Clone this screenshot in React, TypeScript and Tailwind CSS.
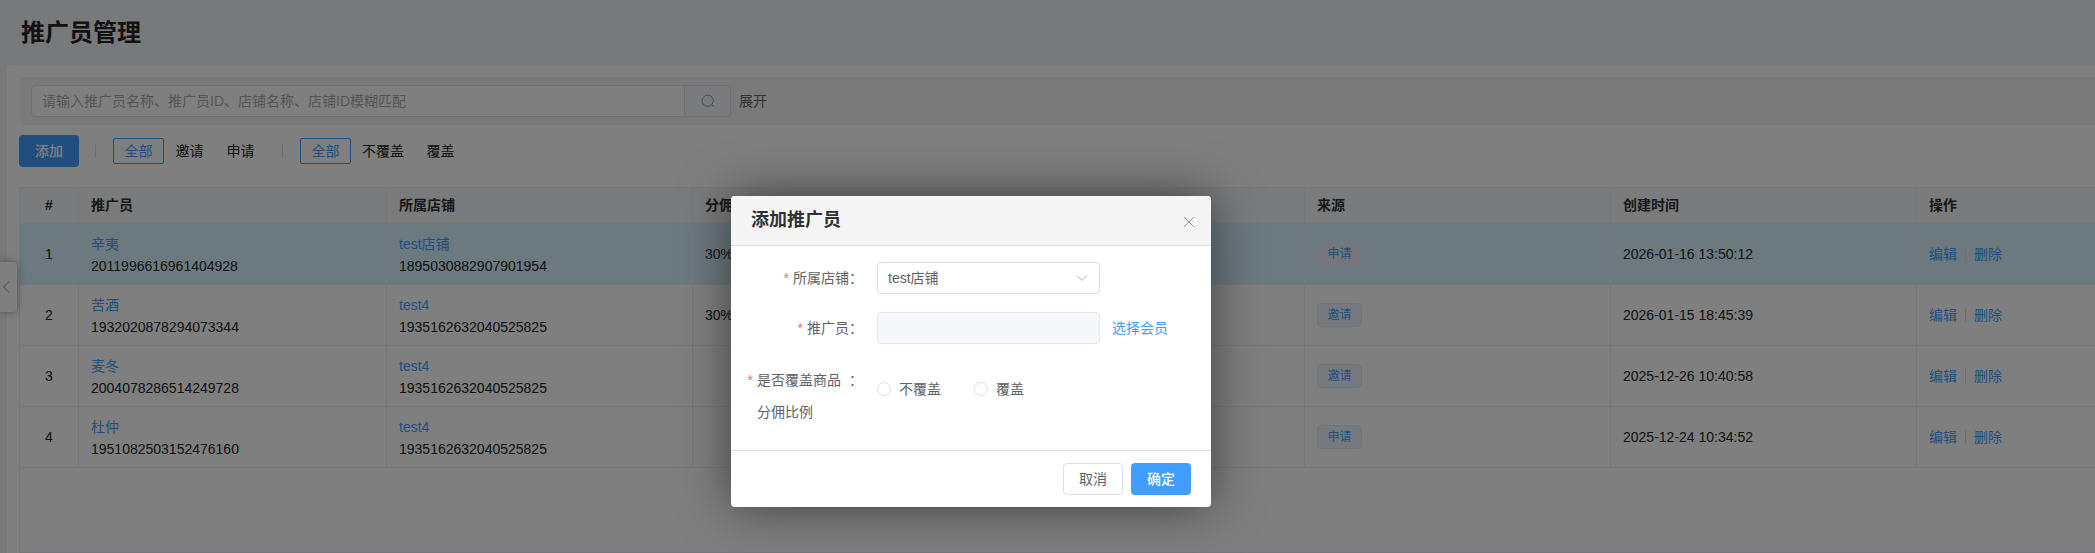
import { useState } from "react"
import clsx from "clsx"

interface Promoter {
    name: string
    id: string
    shop: string
    shopId: string
    rate: string
    source: string
    createdAt: string
}

const promoters: Promoter[] = [
    { name: "辛夷", id: "2011996616961404928", shop: "test店铺", shopId: "1895030882907901954", rate: "30%", source: "申请", createdAt: "2026-01-16 13:50:12" },
    { name: "苦酒", id: "1932020878294073344", shop: "test4", shopId: "1935162632040525825", rate: "30%", source: "邀请", createdAt: "2026-01-15 18:45:39" },
    { name: "麦冬", id: "2004078286514249728", shop: "test4", shopId: "1935162632040525825", rate: "", source: "邀请", createdAt: "2025-12-26 10:40:58" },
    { name: "杜仲", id: "1951082503152476160", shop: "test4", shopId: "1935162632040525825", rate: "", source: "申请", createdAt: "2025-12-24 10:34:52" },
]

const columns = ["推广员", "所属店铺", "分佣比例", "", "来源", "创建时间", "操作"]

function FilterTabs({ options }: Readonly<{ options: string[] }>) {
    const [active, setActive] = useState(options[0])

    return (
        <div className="flex">
            {options.map((option) => (
                <button
                    key={option}
                    type="button"
                    onClick={() => setActive(option)}
                    className={clsx(
                        "h-[26px] min-w-[51px] rounded-xs border px-2.5 leading-6",
                        option === active ? "border-[#409eff] text-[#409eff]" : "border-transparent text-[#222]"
                    )}
                >
                    {option}
                </button>
            ))}
        </div>
    )
}

function SearchBar() {
    return (
        <div className="flex items-center rounded-l-lg bg-[#f5f5f5] px-3 py-2">
            <div className="flex h-8 w-[700px]">
                <input
                    type="text"
                    aria-label="搜索推广员"
                    placeholder="请输入推广员名称、推广员ID、店铺名称、店铺ID模糊匹配"
                    className="min-w-0 flex-1 rounded-l border border-[#dcdfe6] bg-white px-2.5 placeholder:text-[#a8abb2]"
                />
                <button
                    type="button"
                    aria-label="搜索"
                    className="flex w-[46px] items-center justify-center rounded-r border border-l-0 border-[#dcdfe6] bg-[#f5f7fa] text-[#909399]"
                >
                    <svg width="14" height="14" viewBox="0 0 14 14" fill="none" stroke="currentColor">
                        <circle cx="6.7" cy="6.7" r="5.6" />
                        <path d="M10.7 10.7 12.7 12.7" />
                    </svg>
                </button>
            </div>
            <button type="button" className="ml-2 text-[#606266]">展开</button>
        </div>
    )
}

function PromoterTable() {
    return (
        <div className="mt-5 flex-1 border-t border-b border-l border-[#ebeef5]">
            <table className="w-full table-fixed border-separate border-spacing-0 text-left text-[#222]">
                <colgroup>
                    <col className="w-[59px]" />
                    <col className="w-[308px]" />
                    <col className="w-[306px]" />
                    <col className="w-[306px]" />
                    <col className="w-[306px]" />
                    <col className="w-[306px]" />
                    <col className="w-[306px]" />
                    <col />
                </colgroup>
                <thead>
                    <tr className="h-9 bg-[#f5f7fa] text-[#303133] [&>th]:border-b [&>th]:border-[#ebeef5] [&>th]:pb-0.5 [&>th]:font-bold [&>th:not(:last-child)]:border-r">
                        <th className="text-center">#</th>
                        {columns.map((title, i) => (
                            <th key={i} className="px-3">{title}</th>
                        ))}
                    </tr>
                </thead>
                <tbody>
                    {promoters.map((row, i) => (
                        <tr
                            key={row.id}
                            className={clsx(
                                "h-[61px] [&>td]:border-b [&>td]:border-[#ebeef5] [&>td:not(:last-child)]:border-r",
                                i === 0 && "bg-[#d8f2ff]"
                            )}
                        >
                            <td className="text-center">{i + 1}</td>
                            <td className="px-3 pt-0.5 leading-[22px]">
                                <a href="#" className="block text-[#409eff]">{row.name}</a>
                                {row.id}
                            </td>
                            <td className="px-3 pt-0.5 leading-[22px]">
                                <a href="#" className="block text-[#409eff]">{row.shop}</a>
                                {row.shopId}
                            </td>
                            <td className="px-3">{row.rate}</td>
                            <td className="px-3" />
                            <td className="px-3">
                                <span
                                    className={clsx(
                                        "block h-6 w-[45px] rounded border text-center text-xs leading-[22px] text-[#409eff]",
                                        i === 0 ? "border-[#d8f2ff] bg-[#ecedf4]" : "border-[#d9ecff] bg-[#ecf5ff]"
                                    )}
                                >
                                    {row.source}
                                </span>
                            </td>
                            <td className="px-3">{row.createdAt}</td>
                            <td className="px-3">
                                <div className="flex items-center">
                                    <a href="#" className="text-[#409eff]">编辑</a>
                                    <span className="mx-2 h-3.5 w-px bg-[#dcdfe6]" />
                                    <a href="#" className="text-[#409eff]">删除</a>
                                </div>
                            </td>
                        </tr>
                    ))}
                </tbody>
            </table>
        </div>
    )
}

interface FieldLabelProps {
    text: string
    htmlFor?: string
    id?: string
}

function FieldLabel({ text, htmlFor, id }: Readonly<FieldLabelProps>) {
    return (
        <label id={id} htmlFor={htmlFor} className="mr-3.5 flex w-[132px] shrink-0 justify-end leading-8">
            <span className="mr-1 text-[#f56c6c]">*</span>
            <span className="max-w-[92px]">{text}</span>
            <span>：</span>
        </label>
    )
}

function AddPromoterDialog() {
    const [override, setOverride] = useState("")

    return (
        <div
            role="dialog"
            aria-labelledby="dialog-title"
            className="w-[480px] overflow-hidden rounded bg-white text-[#606266]"
        >
            <div className="flex h-[50px] items-center justify-between border-b border-[#dcdfe6] bg-[#f5f5f5] pr-3 pl-5">
                <h2 id="dialog-title" className="pb-0.5 text-lg font-bold text-[#303133]">添加推广员</h2>
                <button type="button" aria-label="关闭" className="p-1 pt-1.5 text-[#909399]">
                    <svg width="12" height="12" viewBox="0 0 12 12" fill="none" stroke="currentColor">
                        <path d="M1 1 11 11M11 1 1 11" />
                    </svg>
                </button>
            </div>

            <form className="pt-4 pb-[22px]">
                <div className="flex">
                    <FieldLabel text="所属店铺" htmlFor="shop" />
                    <div className="relative w-[223px]">
                        <select id="shop" className="h-8 w-full appearance-none rounded border border-[#dcdfe6] bg-white px-2.5">
                            <option>test店铺</option>
                        </select>
                        <svg
                            className="pointer-events-none absolute top-2.5 right-3 text-[#a8abb2]"
                            width="12"
                            height="12"
                            viewBox="0 0 12 12"
                            fill="none"
                            stroke="currentColor"
                        >
                            <path d="M1 3.5 6 8.5 11 3.5" />
                        </svg>
                    </div>
                </div>

                <div className="mt-[18px] flex items-center">
                    <FieldLabel text="推广员" htmlFor="promoter" />
                    <input
                        id="promoter"
                        type="text"
                        disabled
                        className="h-8 w-[223px] rounded border border-[#e4e7ed] bg-[#f5f7fa] px-2.5"
                    />
                    <a href="#" className="ml-3 text-[#409eff]">选择会员</a>
                </div>

                <div className="mt-5 flex items-start">
                    <FieldLabel text="是否覆盖商品分佣比例" id="override-label" />
                    <div role="radiogroup" aria-labelledby="override-label" className="mt-[9px] flex gap-[33px]">
                        {["不覆盖", "覆盖"].map((option) => (
                            <label key={option} className="flex h-8 items-center gap-2">
                                <input
                                    type="radio"
                                    name="override"
                                    checked={override === option}
                                    onChange={() => setOverride(option)}
                                    className="size-3.5 appearance-none rounded-full border border-[#dcdfe6] bg-white checked:border-4 checked:border-[#409eff]"
                                />
                                {option}
                            </label>
                        ))}
                    </div>
                </div>
            </form>

            <div className="flex justify-end gap-2 border-t border-[#dcdfe6] px-5 py-3">
                <button type="button" className="h-8 w-[60px] rounded border border-[#dcdfe6] bg-white">取消</button>
                <button type="button" className="h-8 w-[60px] rounded bg-[#409eff] font-medium text-white">确定</button>
            </div>
        </div>
    )
}

export default function App() {
    return (
        <div className="relative flex min-h-screen flex-col overflow-hidden bg-[#f0f2f5] font-['Liberation_Sans','Noto_Sans_CJK_SC',sans-serif] text-sm">
            <h1 className="flex h-[65px] items-center px-[21px] text-2xl font-bold text-[#222]">推广员管理</h1>

            <main className="ml-[7px] flex flex-1 flex-col rounded-tl bg-white pt-3 pl-3">
                <SearchBar />
                <div className="mt-2.5 flex items-center">
                    <button type="button" className="h-8 w-[60px] rounded bg-[#409eff] font-medium text-white">添加</button>
                    <span className="mr-[17px] ml-4 h-3.5 w-px bg-[#dcdfe6]" />
                    <FilterTabs options={["全部", "邀请", "申请"]} />
                    <span className="mr-[17px] ml-4 h-3.5 w-px bg-[#dcdfe6]" />
                    <FilterTabs options={["全部", "不覆盖", "覆盖"]} />
                </div>
                <PromoterTable />
            </main>

            <button
                type="button"
                aria-label="收起菜单"
                className="absolute top-[262px] left-0 flex h-[50px] w-[17px] items-center justify-start rounded-r bg-white pl-0.5 text-[#909399] shadow-[0_0_8px_rgba(0,0,0,0.4)]"
            >
                <svg width="8" height="14" viewBox="0 0 8 14" fill="none" stroke="currentColor">
                    <path d="M7 1.5 1.5 7 7 12.5" />
                </svg>
            </button>

            <div className="absolute inset-0 flex items-start justify-center bg-black/50 pt-[196px] pr-[153px]">
                <div className="rounded shadow-[0_0_50px_rgba(0,0,0,0.5)]">
                    <AddPromoterDialog />
                </div>
            </div>
        </div>
    )
}
